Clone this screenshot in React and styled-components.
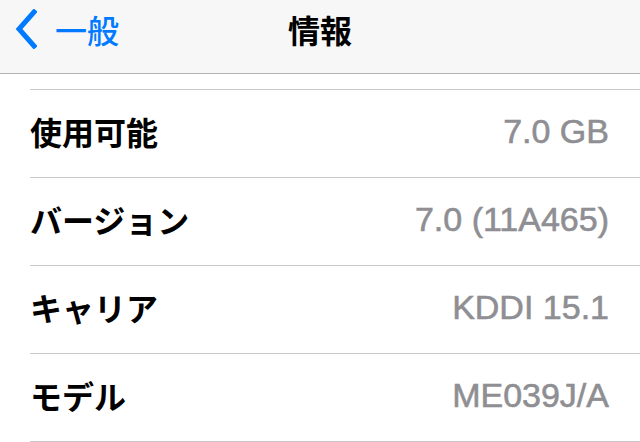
import styled, { createGlobalStyle } from 'styled-components';

const GlobalStyle = createGlobalStyle`
  html, body {
    margin: 0;
    padding: 0;
    background: #ffffff;
  }
  body {
    font-family: "Liberation Sans", "Noto Sans CJK JP", sans-serif;
    -webkit-font-smoothing: antialiased;
  }
`;

const Screen = styled.div`
  width: 640px;
  height: 442px;
  overflow: hidden;
  background: #ffffff;
`;

const NavBar = styled.header`
  box-sizing: border-box;
  height: 74px;
  padding-bottom: 15px;
  background: #f7f7f7;
  border-bottom: 1px solid #b2b2b2;
  display: grid;
  grid-template-columns: 1fr auto 1fr;
  align-items: center;
`;

const BackButton = styled.div`
  display: flex;
  align-items: center;
  gap: 18px;
  padding-left: 15px;
  color: #007aff;
  font-family: "Noto Sans CJK JP", sans-serif;
  font-size: 32px;
  font-weight: 500;
`;

const Title = styled.h1`
  margin: 0;
  font-family: "Noto Sans CJK JP", sans-serif;
  font-size: 32px;
  font-weight: 700;
  color: #000000;
`;

const List = styled.ul`
  list-style: none;
  margin: 15px 0 0 30px;
  padding: 0;
  border-top: 1px solid #c8c7cc;
`;

const Row = styled.li`
  height: 87px;
  border-bottom: 1px solid #c8c7cc;
  display: flex;
  align-items: center;
  justify-content: space-between;
  padding-right: 31px;
`;

const Label = styled.span`
  font-family: "Noto Sans CJK JP", sans-serif;
  font-size: 32px;
  font-weight: 700;
  color: #000000;
  margin-top: -6px;
`;

const Value = styled.span`
  font-family: "Liberation Sans", sans-serif;
  font-size: 34px;
  font-weight: 400;
  color: #8e8e93;
  -webkit-text-stroke: 0.6px #8e8e93;
  margin-top: -5px;
`;

const rows = [
  { label: '使用可能', value: '7.0 GB' },
  { label: 'バージョン', value: '7.0 (11A465)' },
  { label: 'キャリア', value: 'KDDI 15.1' },
  { label: 'モデル', value: 'ME039J/A' },
];

function Chevron() {
  return (
    <svg width="22" height="40" viewBox="0 0 22 40">
      <path d="M19 3 L4 20 L19 37" fill="none" stroke="#007aff" strokeWidth="5" strokeLinecap="square" />
    </svg>
  );
}

export default function App() {
  return (
    <Screen>
      <GlobalStyle />
      <NavBar>
        <BackButton>
          <Chevron />
          <span>一般</span>
        </BackButton>
        <Title>情報</Title>
        <div />
      </NavBar>
      <List>
        {rows.map((r) => (
          <Row key={r.label}>
            <Label>{r.label}</Label>
            <Value>{r.value}</Value>
          </Row>
        ))}
      </List>
    </Screen>
  );
}
